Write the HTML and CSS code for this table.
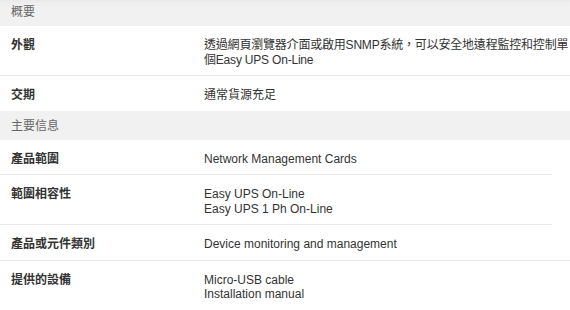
FILE: index.html
```html
<!DOCTYPE html>
<html lang="zh-Hant">
<head>
<meta charset="utf-8">
<link rel="stylesheet" href="styles.css">
</head>
<body>
<div class="spec">
  <div class="section first">概要</div>
  <div class="row">
    <div class="label">外觀</div>
    <div class="value tight">透過網頁瀏覽器介面或啟用SNMP系統，可以安全地遠程監控和控制單個Easy UPS On-Line</div>
  </div>
  <div class="row last">
    <div class="label">交期</div>
    <div class="value">通常貨源充足</div>
  </div>
  <div class="section">主要信息</div>
  <div class="row short">
    <div class="label">產品範圍</div>
    <div class="value">Network Management Cards</div>
  </div>
  <div class="row short">
    <div class="label">範圍相容性</div>
    <div class="value">Easy UPS On-Line<br>Easy UPS 1 Ph On-Line</div>
  </div>
  <div class="row">
    <div class="label">產品或元件類別</div>
    <div class="value">Device monitoring and management</div>
  </div>
  <div class="row last">
    <div class="label">提供的設備</div>
    <div class="value">Micro-USB cable<br>Installation manual</div>
  </div>
</div>
</body>
</html>
```

FILE: styles.css
```css
html, body {
  margin: 0;
  padding: 0;
  background: #ffffff;
}
body {
  font-family: "Liberation Sans", Arial, "Noto Sans CJK TC", sans-serif;
  font-size: 12px;
  color: #333333;
}
.spec {
  margin-top: -3px;
  width: 570px;
}
.section {
  background: #f1f1f1;
  color: #666666;
  height: 29px;
  line-height: 30px;
  padding-left: 11px;
}
.section.first {
  background: linear-gradient(#e4e4e4 0, #efefef 6px, #f1f1f1 10px);
}
.row {
  display: grid;
  grid-template-columns: 193px 1fr;
  padding: 12px 0 8px 11px;
  line-height: 14.5px;
  border-bottom: 1px solid #ebebeb;
}
.row.short {
  width: 541px;
}
.row.last {
  border-bottom: none;
}
.label {
  font-weight: bold;
}
.tight {
  letter-spacing: -0.2px;
}
```
